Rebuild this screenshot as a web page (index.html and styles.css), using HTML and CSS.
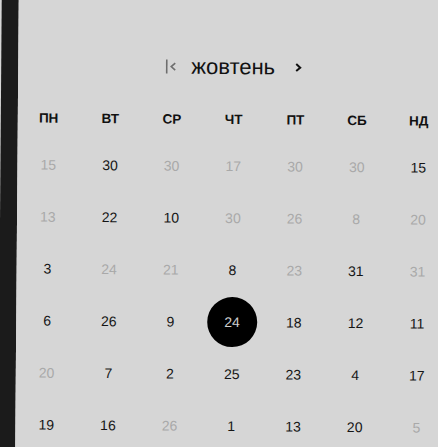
FILE: index.html
```html
<!DOCTYPE html>
<html lang="uk">
<head>
<meta charset="utf-8">
<link rel="stylesheet" href="styles.css">
</head>
<body>
<div class="stage">
  <div class="band"></div>
  <div class="panel">
    <div class="title-row">
      <svg class="first-icon" width="12" height="16" viewBox="0 0 12 16"><path d="M1.5 1 V15" stroke="#6e6e6e" stroke-width="1.6" fill="none"/><path d="M10 4.5 L6 8 L10 11.5" stroke="#6e6e6e" stroke-width="1.6" fill="none"/></svg>
      <span class="month">жовтень</span>
      <svg class="next-icon" width="10" height="14" viewBox="0 0 10 14"><path d="M3 3.5 L7 7 L3 10.5" stroke="#111" stroke-width="2" fill="none"/></svg>
    </div>
    <div class="heads">
      <div class="head">ПН</div><div class="head">ВТ</div><div class="head">СР</div><div class="head">ЧТ</div><div class="head">ПТ</div><div class="head">СБ</div><div class="head">НД</div>
    </div>
    <div class="days">
      <div class="day muted">15</div><div class="day">30</div><div class="day muted">30</div><div class="day muted">17</div><div class="day muted">30</div><div class="day muted">30</div><div class="day">15</div>

      <div class="day muted">13</div><div class="day">22</div><div class="day">10</div><div class="day muted">30</div><div class="day muted">26</div><div class="day muted">8</div><div class="day muted">20</div>

      <div class="day">3</div><div class="day muted">24</div><div class="day muted">21</div><div class="day">8</div><div class="day muted">23</div><div class="day">31</div><div class="day muted">31</div>

      <div class="day">6</div><div class="day">26</div><div class="day">9</div><div class="day"><span class="selected">24</span></div><div class="day">18</div><div class="day">12</div><div class="day">11</div>

      <div class="day muted">20</div><div class="day">7</div><div class="day">2</div><div class="day">25</div><div class="day">23</div><div class="day">4</div><div class="day">17</div>

      <div class="day">19</div><div class="day">16</div><div class="day muted">26</div><div class="day">1</div><div class="day">13</div><div class="day">20</div><div class="day muted">5</div>
    </div>
  </div>
</div>
</body>
</html>
```

FILE: styles.css
```css
html, body {
  margin: 0;
  padding: 0;
  width: 438px;
  height: 447px;
  overflow: hidden;
  background: #d6d6d6;
}

.stage {
  display: flex;
  width: 460px;
  height: 470px;
  margin-top: -8px;
  transform: rotate(0.45deg);
  transform-origin: 219px 231px;
  font-family: "Liberation Sans", Arial, sans-serif;
}

.band {
  width: 17px;
  flex: none;
  background: #1b1b1b;
}

.panel {
  flex: none;
  width: 432px;
  background: #d6d6d6;
  padding-top: 60px;
}

.title-row {
  height: 30px;
  display: flex;
  align-items: center;
  justify-content: center;
}

.first-icon {
  margin-right: 14px;
}

.month {
  font-size: 22px;
  color: #111;
  line-height: 30px;
  margin-right: 18px;
}

.heads,
.days {
  display: grid;
  grid-template-columns: repeat(7, 61.7px);
}

.heads {
  margin-top: 27px;
  height: 20px;
  margin-bottom: 11px;
}

.days {
  grid-auto-rows: 52px;
}

.head {
  display: flex;
  align-items: center;
  justify-content: center;
  font-size: 13.5px;
  font-weight: bold;
  color: #111;
}

.day {
  display: flex;
  align-items: center;
  justify-content: center;
  font-size: 14px;
  color: #151515;
}

.muted {
  color: #a9a9a9;
}

.selected {
  display: flex;
  align-items: center;
  justify-content: center;
  width: 50px;
  height: 50px;
  border-radius: 50%;
  background: #000;
  color: #cfcfcf;
}
```
